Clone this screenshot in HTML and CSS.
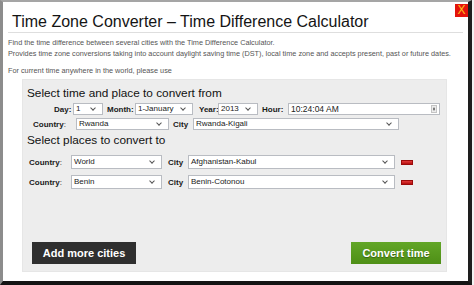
FILE: index.html
```html
<!DOCTYPE html>
<html>
<head>
  <meta charset="UTF-8" />
  <title>Time Zone Converter</title>
  <link rel="stylesheet" href="styles.css">
</head>
<body>

  <div class="window">
    <span class="close">X</span>

    <h1 class="title">Time Zone Converter – Time Difference Calculator</h1>

    <div class="intro">
      <p>Find the time difference between several cities with the Time Difference Calculator.</p>
      <p>Provides time zone conversions taking into account daylight saving time (DST), local time zone and accepts present, past or future dates.</p>
      <p class="spaced">For current time anywhere in the world, please use</p>
    </div>

    <!-- converter form -->
    <div class="panel">
      <h2>Select time and place to convert from</h2>

      <div class="row row-date">
        <span class="lbl lbl-day">Day:</span>
        <span class="field w-day">1<i class="caret"></i></span>
        <span class="lbl lbl-month">Month:</span>
        <span class="field w-month">1-January<i class="caret"></i></span>
        <span class="lbl lbl-year">Year:</span>
        <span class="field w-year">2013<i class="caret"></i></span>
        <span class="lbl lbl-hour">Hour:</span>
        <span class="field w-hour">10:24:04 AM<i class="spin"></i></span>
      </div>

      <div class="row row-from">
        <span class="lbl lbl-country">Country<b>:</b></span>
        <span class="field w-country">Rwanda<i class="caret"></i></span>
        <span class="lbl lbl-city">City</span>
        <span class="field w-city">Rwanda-Kigali<i class="caret"></i></span>
      </div>

      <h2 class="second">Select places to convert to</h2>

      <div class="row row-to">
        <span class="lbl lbl-country2">Country<b>:</b></span>
        <span class="field w-country2">World<i class="caret"></i></span>
        <span class="lbl lbl-city2">City</span>
        <span class="field w-city2">Afghanistan-Kabul<i class="caret"></i></span>
        <span class="remove"></span>
      </div>

      <div class="row row-to">
        <span class="lbl lbl-country2">Country<b>:</b></span>
        <span class="field w-country2">Benin<i class="caret"></i></span>
        <span class="lbl lbl-city2">City</span>
        <span class="field w-city2">Benin-Cotonou<i class="caret"></i></span>
        <span class="remove"></span>
      </div>

      <div class="actions">
        <button class="btn btn-add">Add more cities</button>
        <button class="btn btn-convert">Convert time</button>
      </div>
    </div>
  </div>

</body>
</html>
```

FILE: styles.css
```css
html, body {
  margin: 0;
  padding: 0;
}

body {
  font-family: "Liberation Sans", Arial, sans-serif;
  background: #f2f2f2;
  color: #111;
  width: 474px;
  height: 285px;
  overflow: hidden;
}

.window {
  position: relative;
  width: 465px;
  height: 279px;
  background: #fff;
  border-left: 3px solid #8c8c8c;
  border-top: 2px solid #a5a5a5;
  border-right: 4px solid #1e1e1e;
  border-bottom: 4px solid #141414;
}

/* red close box in the corner */
.close {
  position: absolute;
  top: 2px;
  right: 0;
  width: 13px;
  height: 13px;
  background: #e4140c;
  color: #ffc21c;
  font-size: 12px;
  line-height: 13px;
  text-align: center;
}

.title {
  margin: 10px 0 0 5px;
  width: 455px;
  padding: 0 0 0 4px;
  font-size: 16px;
  font-weight: normal;
  line-height: 20px;
  color: #141414;
  border-bottom: 1px solid #dedede;
  box-sizing: border-box;
}

.intro {
  margin: 4px 0 0 5px;
  font-size: 7.3px;
  line-height: 11px;
  color: #555;
}

.intro p {
  margin: 0;
}

.intro .spaced {
  margin-top: 6px;
}

/* grey form panel */
.panel {
  margin: 3px 0 0 19px;
  width: 425px;
  height: 193px;
  box-sizing: border-box;
  padding: 6px 0 0 4px;
  background: #ededed;
  border: 1px solid #e6e6e6;
  display: flex;
  flex-direction: column;
}

.panel h2 {
  margin: 0;
  font-size: 11.8px;
  font-weight: normal;
  line-height: 15px;
  color: #111;
}

.panel h2.second {
  margin-top: 3px;
}

.row {
  display: flex;
  align-items: center;
  font-size: 8px;
}

.row-date {
  margin-top: 2px;
  height: 12px;
  padding-left: 27px;
}

.row-from {
  margin-top: 3px;
  height: 12px;
  padding-left: 6px;
}

.row-to {
  margin-top: 7px;
  height: 14px;
  padding-left: 2px;
}

.row-to + .row-to {
  margin-top: 6px;
}

.lbl {
  flex: none;
  font-weight: bold;
  font-size: 8px;
  color: #1a1a1a;
}

.lbl b {
  font-weight: normal;
}

.lbl-day { width: 19px; }
.lbl-month { width: 28px; margin-left: 4px; }
.lbl-year { width: 19px; margin-left: 6px; }
.lbl-hour { width: 26px; margin-left: 4px; }
.lbl-country { width: 43px; }
.lbl-city { width: 20px; margin-left: 4px; }
.lbl-country2 { width: 42px; }
.lbl-city2 { width: 20px; margin-left: 6px; }

.field {
  flex: none;
  position: relative;
  height: 100%;
  box-sizing: border-box;
  border: 1px solid #b9bcc2;
  background: #fff;
  padding-left: 2px;
  font-size: 8px;
  line-height: 10px;
  color: #222;
  display: flex;
  align-items: center;
}

.w-day { width: 30px; }
.w-month { width: 58px; }
.w-year { width: 40px; }
.w-hour { width: 152px; font-size: 8.5px; }
.w-country { width: 93px; }
.w-city { width: 206px; }
.w-country2 { width: 91px; }
.w-city2 { width: 207px; }

/* small chevron of the select boxes */
.caret {
  position: absolute;
  right: 7px;
  top: 50%;
  width: 3px;
  height: 3px;
  margin-top: -3px;
  border-right: 1px solid #555;
  border-bottom: 1px solid #555;
  transform: rotate(45deg);
}

/* up/down spinner of the hour input */
.spin {
  position: absolute;
  right: 2px;
  top: 1px;
  bottom: 1px;
  width: 6px;
  background: #ececec;
  border: 1px solid #c4c4c4;
  box-sizing: border-box;
}

.spin:before,
.spin:after {
  content: "";
  position: absolute;
  left: 1px;
  border-left: 1px solid transparent;
  border-right: 1px solid transparent;
}

.spin:before {
  top: 1px;
  border-bottom: 2px solid #555;
}

.spin:after {
  bottom: 1px;
  border-top: 2px solid #555;
}

.remove {
  margin-left: 6px;
  width: 12px;
  height: 5px;
  background: linear-gradient(#e33a3a, #b30e0e);
  border: 1px solid #9a0b0b;
  box-sizing: border-box;
}

.actions {
  margin-top: auto;
  margin-bottom: 7px;
  display: flex;
  justify-content: space-between;
  padding: 0 5px;
}

.btn {
  height: 22px;
  border: none;
  padding: 0;
  font-family: "Liberation Sans", Arial, sans-serif;
  font-size: 11px;
  font-weight: bold;
  color: #fff;
}

.btn-add {
  width: 104px;
  background: #2f2f2f;
}

.btn-convert {
  width: 90px;
  background: linear-gradient(#62a627, #4e8f16);
  text-shadow: 0 1px 1px rgba(0, 0, 0, 0.35);
}
```
